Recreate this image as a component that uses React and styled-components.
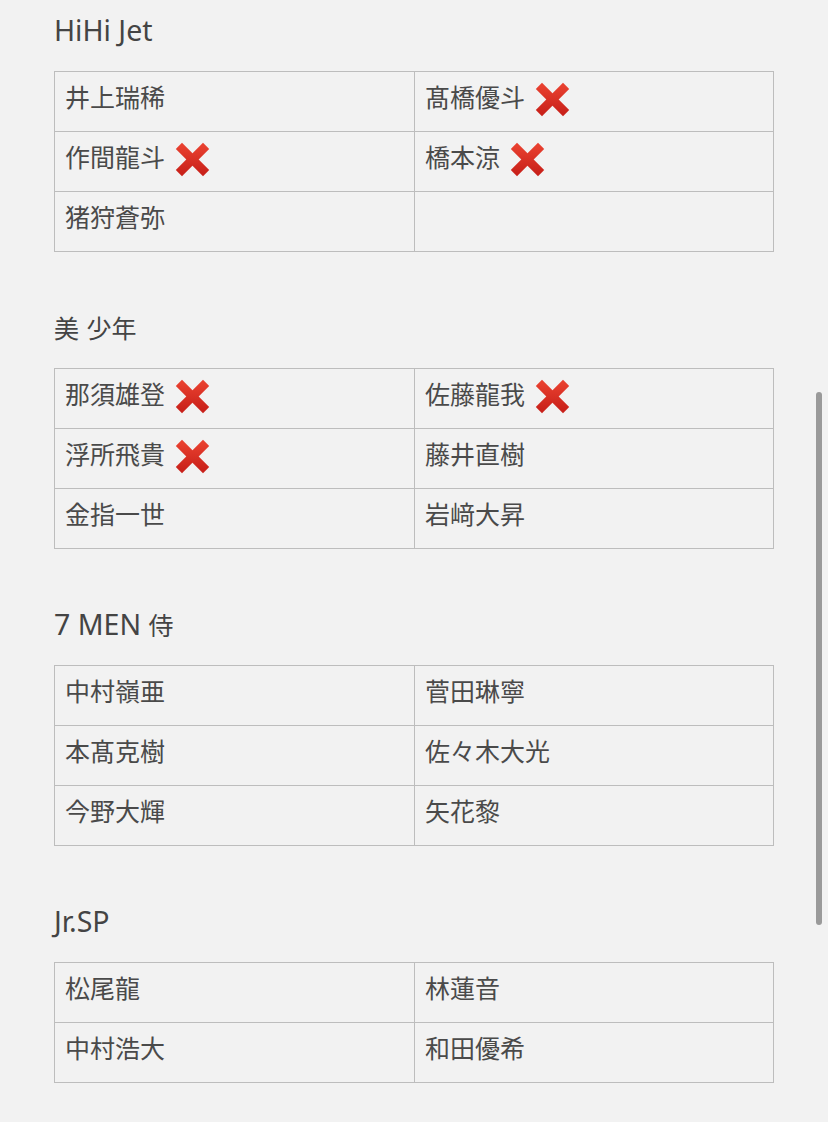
import styled, { createGlobalStyle } from 'styled-components';

const groups = [
  {
    name: 'HiHi Jet',
    members: [
      { name: '井上瑞稀' },
      { name: '髙橋優斗', out: true },
      { name: '作間龍斗', out: true },
      { name: '橋本涼', out: true },
      { name: '猪狩蒼弥' },
      { name: '' },
    ],
  },
  {
    name: '美 少年',
    members: [
      { name: '那須雄登', out: true },
      { name: '佐藤龍我', out: true },
      { name: '浮所飛貴', out: true },
      { name: '藤井直樹' },
      { name: '金指一世' },
      { name: '岩﨑大昇' },
    ],
  },
  {
    name: '7 MEN 侍',
    members: [
      { name: '中村嶺亜' },
      { name: '菅田琳寧' },
      { name: '本髙克樹' },
      { name: '佐々木大光' },
      { name: '今野大輝' },
      { name: '矢花黎' },
    ],
  },
  {
    name: 'Jr.SP',
    members: [
      { name: '松尾龍' },
      { name: '林蓮音' },
      { name: '中村浩大' },
      { name: '和田優希' },
    ],
  },
];

// latin letters in the original font run larger than the kanji, so split them
const splitTitle = text => text.split(/([\u3000-\u9fff]+)/).filter(Boolean);
const isCjk = part => /[\u3000-\u9fff]/.test(part);

const CrossMark = () => (
  <CrossIcon viewBox="0 0 36 36" aria-hidden="true">
    <defs>
      <linearGradient id="xg" x1="0" y1="0" x2="0" y2="1">
        <stop offset="0" stopColor="#e8402f" />
        <stop offset="1" stopColor="#c9211a" />
      </linearGradient>
    </defs>
    <line x1="4" y1="4" x2="32" y2="32" stroke="url(#xg)" strokeWidth="9" />
    <line x1="32" y1="4" x2="4" y2="32" stroke="url(#xg)" strokeWidth="9" />
  </CrossIcon>
);

const App = () => {
  return (
    <>
      <GlobalStyle />
      <Page>
        {groups.map(group => (
          <Section key={group.name}>
            <Title>
              {splitTitle(group.name).map((part, i) =>
                isCjk(part) ? <Kanji key={i}>{part}</Kanji> : <span key={i}>{part}</span>
              )}
            </Title>
            <Grid>
              {group.members.map((m, i) => (
                <Cell key={i}>
                  {m.name}
                  {m.out && <CrossMark />}
                </Cell>
              ))}
            </Grid>
          </Section>
        ))}
      </Page>
      <ScrollThumb />
    </>
  );
};

const GlobalStyle = createGlobalStyle`
  html, body {
    margin: 0;
    padding: 0;
    background: #f2f2f2;
  }
  body {
    font-family: "Noto Sans", "Noto Sans CJK JP", sans-serif;
    color: #474747;
  }
`;

const Page = styled.div`
  padding: 15px 54px 0 54px;
  display: flex;
  flex-direction: column;
  gap: 60px;
`;

const Section = styled.section`
  display: flex;
  flex-direction: column;
`;

const Title = styled.h2`
  margin: 0 0 26px 0;
  height: 30px;
  font-family: "Noto Sans", "Noto Sans CJK JP", sans-serif;
  font-size: 28.5px;
  line-height: 30px;
  font-weight: 400;
  color: #444444;
  white-space: pre;
`;

const Kanji = styled.span`
  font-family: "Noto Sans CJK JP", sans-serif;
  font-size: 25px;
`;

const Grid = styled.div`
  width: 719px;
  display: grid;
  grid-template-columns: 360px 359px;
  border-top: 1px solid #bdbdbd;
  border-left: 1px solid #bdbdbd;
`;

const Cell = styled.div`
  height: 60px;
  box-sizing: border-box;
  display: flex;
  align-items: center;
  gap: 10px;
  padding: 0 0 10px 10px;
  border-right: 1px solid #bdbdbd;
  border-bottom: 1px solid #bdbdbd;
  font-family: "Noto Sans CJK JP", sans-serif;
  font-size: 25px;
  line-height: 1;
  color: #4a4a4a;
`;

const CrossIcon = styled.svg`
  width: 35px;
  height: 35px;
  flex-shrink: 0;
  margin-top: 5px;
`;

const ScrollThumb = styled.div`
  position: fixed;
  right: 6px;
  top: 392px;
  width: 6px;
  height: 533px;
  border-radius: 3px;
  background: #9a9a9a;
`;

export default App;
